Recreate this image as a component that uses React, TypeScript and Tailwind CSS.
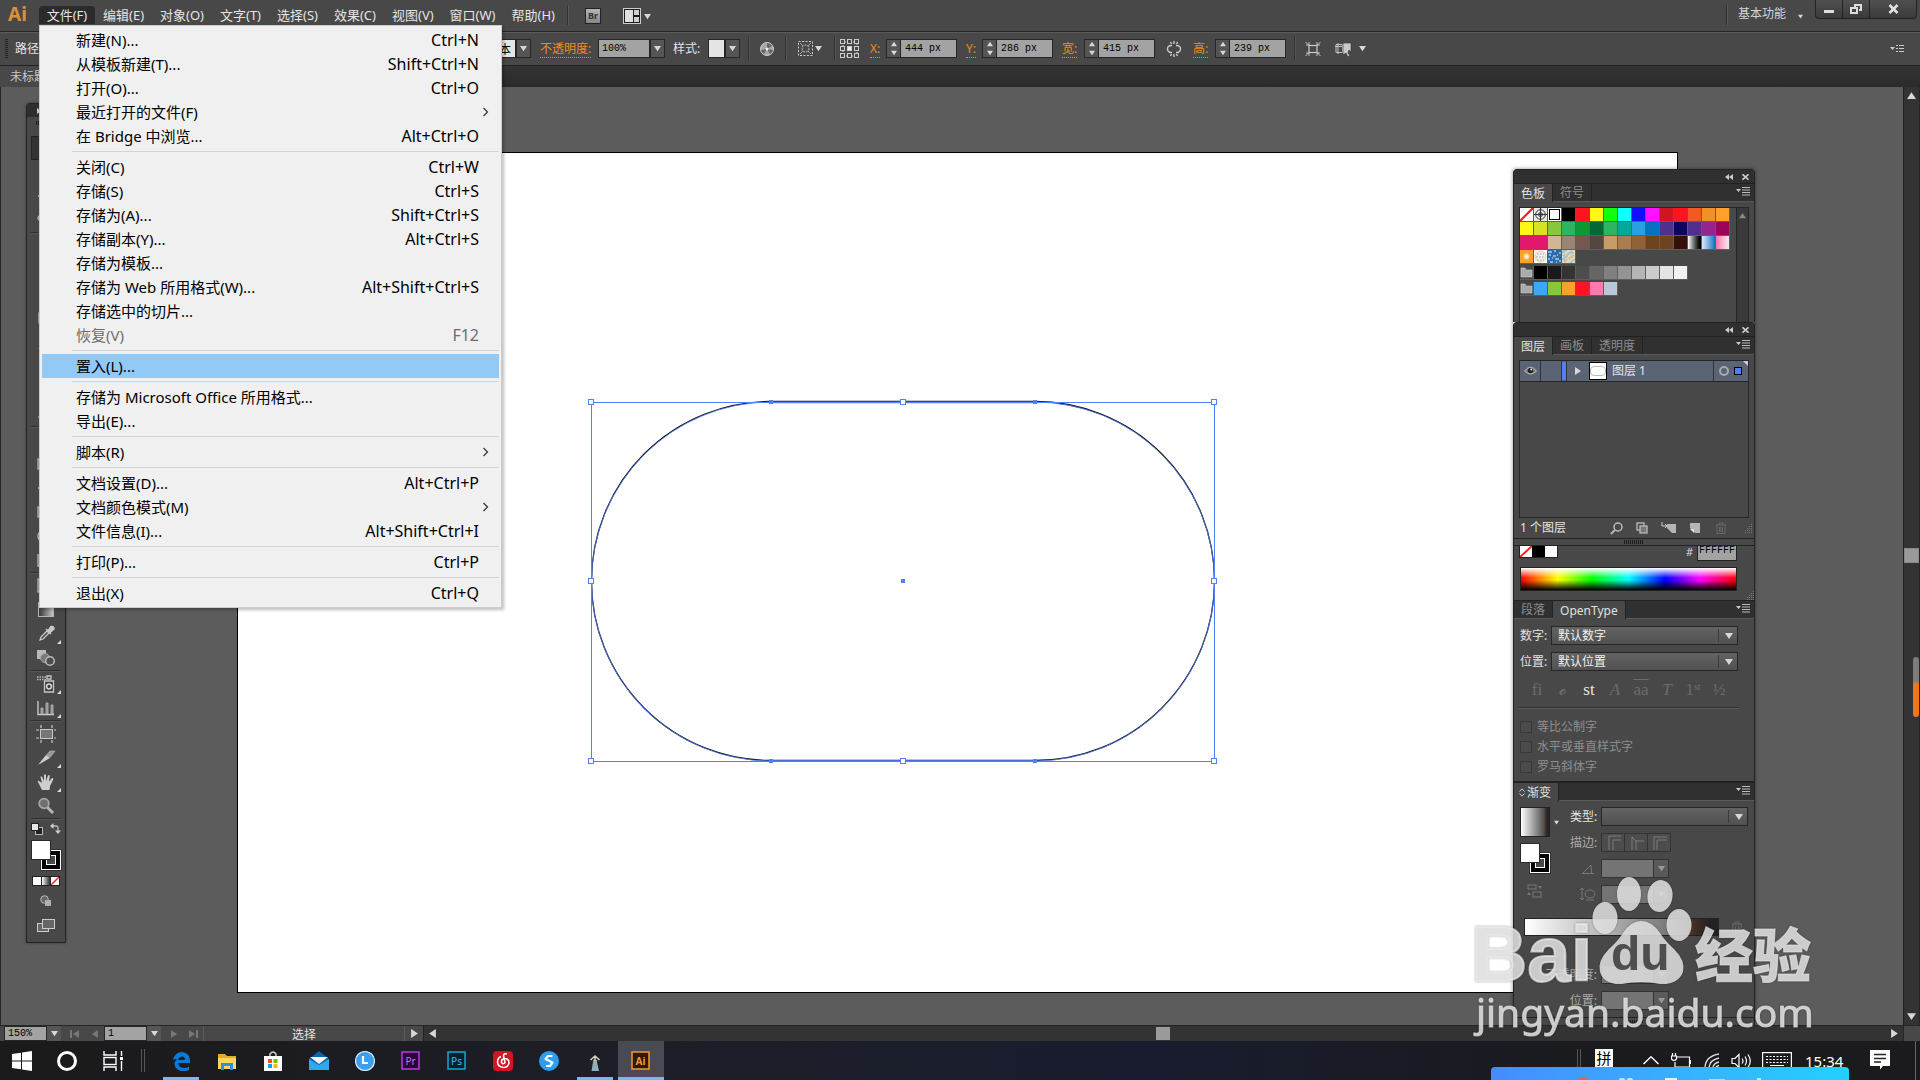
import React from "react";

const UI = 'font-["Noto_Sans","Noto_Sans_CJK_SC",sans-serif]';

type MenuEntry = { label: string; keys?: string; sub?: boolean; disabled?: boolean; active?: boolean };

const fileMenu: MenuEntry[][] = [
  [
    { label: "新建(N)...", keys: "Ctrl+N" },
    { label: "从模板新建(T)...", keys: "Shift+Ctrl+N" },
    { label: "打开(O)...", keys: "Ctrl+O" },
    { label: "最近打开的文件(F)", sub: true },
    { label: "在 Bridge 中浏览...", keys: "Alt+Ctrl+O" },
  ],
  [
    { label: "关闭(C)", keys: "Ctrl+W" },
    { label: "存储(S)", keys: "Ctrl+S" },
    { label: "存储为(A)...", keys: "Shift+Ctrl+S" },
    { label: "存储副本(Y)...", keys: "Alt+Ctrl+S" },
    { label: "存储为模板..." },
    { label: "存储为 Web 所用格式(W)...", keys: "Alt+Shift+Ctrl+S" },
    { label: "存储选中的切片..." },
    { label: "恢复(V)", keys: "F12", disabled: true },
  ],
  [{ label: "置入(L)...", active: true }],
  [{ label: "存储为 Microsoft Office 所用格式..." }, { label: "导出(E)..." }],
  [{ label: "脚本(R)", sub: true }],
  [
    { label: "文档设置(D)...", keys: "Alt+Ctrl+P" },
    { label: "文档颜色模式(M)", sub: true },
    { label: "文件信息(I)...", keys: "Alt+Shift+Ctrl+I" },
  ],
  [{ label: "打印(P)...", keys: "Ctrl+P" }],
  [{ label: "退出(X)", keys: "Ctrl+Q" }],
];

const topMenus = ["编辑(E)", "对象(O)", "文字(T)", "选择(S)", "效果(C)", "视图(V)", "窗口(W)", "帮助(H)"];

function Tri({ dir = "down", size = 7, color = "#d8d8d8" }: { dir?: "down" | "up" | "left" | "right"; size?: number; color?: string }) {
  const pts = { down: "0,1 8,1 4,7", up: "0,7 8,7 4,1", left: "7,0 7,8 1,4", right: "1,0 1,8 7,4" }[dir];
  return (
    <svg width={size} height={size} viewBox="0 0 8 8" className="shrink-0" aria-hidden="true">
      <polygon points={pts} fill={color} />
    </svg>
  );
}

function FileMenu() {
  return (
    <div role="menu" className="absolute top-full left-0 z-30 mt-px w-[463px] border border-[#cccccc] bg-[#f0f0f0] py-[2px] text-[15px] text-black shadow-[2px_2px_3px_rgba(0,0,0,0.25)]">
      {fileMenu.map((group, g) => (
        <React.Fragment key={g}>
          {g > 0 && <div className="my-[3px] mr-[2px] ml-8 h-px bg-[#d4d4d4]" />}
          {group.map((m) => (
            <button
              key={m.label}
              type="button"
              role="menuitem"
              disabled={m.disabled}
              className={`mx-[2px] flex h-6 w-[457px] items-center justify-between pr-5 pl-[34px] text-left whitespace-nowrap ${m.active ? "bg-[#91c9f7]" : ""} ${m.disabled ? "text-[#6d6d6d]" : ""}`}
            >
              <span>{m.label}</span>
              {m.keys && <span className="text-[16px]">{m.keys}</span>}
              {m.sub && (
                <svg width="7" height="10" viewBox="0 0 7 10" className="-mr-[10px]" aria-hidden="true">
                  <path d="M1.5 1L5.5 5L1.5 9" fill="none" stroke="#333" strokeWidth="1.2" />
                </svg>
              )}
            </button>
          ))}
        </React.Fragment>
      ))}
    </div>
  );
}

function MenuBar() {
  return (
    <header className="flex h-[31px] shrink-0 items-start bg-[#484848] text-[13px] text-[#e4e4e4]">
      <div className="w-[38px] pl-2 pt-[3px] text-[19px] leading-[22px] font-bold text-[#d9913a]">Ai</div>
      <div className="relative mt-[6px]">
        <button type="button" aria-haspopup="menu" className="ml-px h-[18px] w-[56px] rounded-t-sm bg-[#2b2b2b] text-center leading-[19px]">
          文件(F)
        </button>
        <div className="absolute top-0 left-px h-[18px] w-[56px]">
          <FileMenu />
        </div>
      </div>
      <nav className="mt-[6px] flex">
        {topMenus.map((m) => (
          <button key={m} type="button" className="h-[18px] px-2 leading-[19px] whitespace-nowrap">
            {m}
          </button>
        ))}
      </nav>
      <div className="mt-[5px] ml-1 h-5 w-[2px] border-l border-[#333] bg-[#5a5a5a]" />
      <button type="button" className="mt-2 ml-4 h-4 w-4 border border-[#222] bg-gradient-to-b from-[#b5b5b5] to-[#868686] text-center text-[9px] leading-[14px] font-bold text-[#333]">
        Br
      </button>
      <button type="button" aria-label="排列文档" className="mt-2 ml-[22px] flex h-4 items-center gap-[3px]">
        <svg width="18" height="16" viewBox="0 0 18 16">
          <rect x=".5" y=".5" width="17" height="15" fill="#1e1e1e" stroke="#ccc" />
          <rect x="2" y="2" width="8" height="12" fill="#e0e0e0" />
          <rect x="11" y="2" width="5" height="5" fill="#d0d0d0" />
          <rect x="11" y="9" width="5" height="5" fill="#d0d0d0" />
        </svg>
        <Tri />
      </button>
      <div className="flex-1" />
      <div className="mt-[5px] h-5 w-[2px] border-l border-[#303030] bg-[#5a5a5a]" />
      <button type="button" className="mt-[5px] ml-[10px] flex h-[18px] items-center gap-3 text-[12px] text-[#d5d5d5]">
        <span>基本功能</span>
        <span className="mt-1 mr-3">
          <Tri size={5} />
        </span>
      </button>
      <div className="mr-[3px] flex h-[19px] rounded-b border border-t-0 border-[#222] bg-gradient-to-b from-[#505050] to-[#3a3a3a]">
        <button type="button" aria-label="最小化" className="flex w-[27px] justify-center border-r border-[#222] pt-[10px]">
          <span className="h-[3px] w-[10px] bg-[#ddd]" />
        </button>
        <button type="button" aria-label="还原" className="flex w-[27px] justify-center border-r border-[#222] pt-1">
          <svg width="12" height="10" viewBox="0 0 12 10" fill="none" stroke="#ddd" strokeWidth="2">
            <path d="M5 3V1H11V6H9" />
            <rect x="1" y="4" width="6" height="5" />
          </svg>
        </button>
        <button type="button" aria-label="关闭窗口" className="flex w-[46px] justify-center pt-1">
          <svg width="11" height="10" viewBox="0 0 11 10" stroke="#e2e2e2" strokeWidth="2.6">
            <path d="M1.5 1L9.5 9M9.5 1L1.5 9" />
          </svg>
        </button>
      </div>
    </header>
  );
}

function Drop({ label, className = "" }: { label: string; className?: string }) {
  return (
    <button type="button" aria-label={label} className={`flex h-[19px] w-[15px] shrink-0 items-center justify-center border border-[#262626] bg-[#555] ${className}`}>
      <Tri />
    </button>
  );
}

function NumField({ id, label, value, wide }: { id: string; label: string; value: string; wide?: boolean }) {
  return (
    <div className="flex shrink-0 items-center">
      <label htmlFor={id} className={`${wide ? "w-[22px]" : "w-4"} text-[#f08a24]`}>
        <span className="border-b border-dotted border-[#f08a24]">{label}:</span>
      </label>
      <div className="flex h-[19px] w-[15px] flex-col items-center justify-between border border-[#262626] bg-[#555] py-px">
        <Tri dir="up" size={6} />
        <Tri size={6} />
      </div>
      <input id={id} defaultValue={value} className='h-[19px] w-14 border border-l-0 border-[#262626] bg-[#a3a3a3] px-1 font-["Liberation_Mono",monospace] text-[10px] text-black' />
    </div>
  );
}

function Sep() {
  return <div className="h-6 w-[2px] shrink-0 border-l border-[#333] bg-[#555]" />;
}

function ControlBar() {
  return (
    <div className="flex h-[34px] shrink-0 items-center overflow-hidden border-t border-[#262626] bg-[#484848] text-[12px] text-[#e4e4e4] shadow-[inset_0_1px_0_#5a5a5a]">
      <div className="ml-[5px] h-5 w-[3px] bg-[repeating-linear-gradient(to_bottom,#222_0_1px,#484848_1px_2px)]" />
      <span className="ml-[7px] w-[420px]">路径</span>
      <label htmlFor="brush" className="sr-only">画笔定义</label>
      <input id="brush" defaultValue="基本" className="h-[19px] w-[81px] border border-[#262626] bg-[#e6e6e6] px-1 text-right text-[12px] text-black" />
      <Drop label="画笔列表" />
      <label htmlFor="opacity" className="ml-[9px] w-[58px] shrink-0 text-[#f08a24]">
        <span className="border-b border-dotted border-[#f08a24]">不透明度:</span>
      </label>
      <input id="opacity" defaultValue="100%" className='h-[19px] w-[52px] shrink-0 border border-[#262626] bg-[#a3a3a3] px-[3px] font-["Liberation_Mono",monospace] text-[10px] text-black' />
      <Drop label="不透明度列表" />
      <span className="ml-2 w-[35px] shrink-0">样式:</span>
      <div className="h-[19px] w-[17px] shrink-0 border border-[#262626] bg-[#e4e4e4]" />
      <Drop label="图形样式" />
      <div className="ml-2"><Sep /></div>
      <svg width="14" height="14" viewBox="0 0 14 14" className="ml-[10px] shrink-0">
        <circle cx="7" cy="7" r="6.5" fill="#a8a8a8" stroke="#ccc" />
        <path d="M7 7V1A6 6 0 0 1 12 4ZM7 7L13 8A6 6 0 0 1 10 12ZM7 7L4 12A6 6 0 0 1 1 8Z" fill="#666" />
        <circle cx="7" cy="7" r="1.5" fill="#eee" />
      </svg>
      <div className="ml-[11px]"><Sep /></div>
      <button type="button" aria-label="选择类似对象" className="ml-[11px] flex shrink-0 items-center gap-[2px]">
        <svg width="15" height="15" viewBox="0 0 15 15" fill="none" stroke="#ccc">
          <rect x=".5" y=".5" width="14" height="14" strokeDasharray="2 1.5" />
          <circle cx="7.5" cy="7.5" r="3.5" strokeDasharray="2 1" />
          <path d="M2 2L5 5M13 2L10 5M2 13L5 10M13 13L10 10" strokeWidth=".7" />
        </svg>
        <Tri />
      </button>
      <div className="ml-[12px]"><Sep /></div>
      <svg width="20" height="20" viewBox="0 0 20 20" className="ml-1 shrink-0" fill="none" stroke="#ccc">
        <path d="M3 3H17V17H3Z" strokeDasharray="1 1" />
        {[1, 8, 15].map((y) => [1, 8, 15].map((x) => <rect key={`${x}-${y}`} x={x - 0.5} y={y - 0.5} width="4" height="4" fill={x === 8 && y === 8 ? "#eee" : "#484848"} />))}
      </svg>
      <div className="ml-[10px]"><NumField id="px" label="X" value="444 px" /></div>
      <div className="ml-[9px]"><NumField id="py" label="Y" value="286 px" /></div>
      <div className="ml-[9px]"><NumField id="pw" label="宽" value="415 px" wide /></div>
      <svg width="16" height="16" viewBox="0 0 16 16" className="ml-[11px] shrink-0" fill="none" stroke="#ccc" strokeWidth="1.4">
        <path d="M6 4.5H5A3.5 3.5 0 0 0 5 11.5H6M10 4.5H11A3.5 3.5 0 0 1 11 11.5H10M8 0V3M4.5 1L5.5 3M11.5 1L10.5 3M8 13V16M4.5 15L5.5 13M11.5 15L10.5 13" />
      </svg>
      <div className="ml-[11px]"><NumField id="ph" label="高" value="239 px" wide /></div>
      <div className="ml-2"><Sep /></div>
      <svg width="16" height="16" viewBox="0 0 16 16" className="ml-[9px] shrink-0" fill="none" stroke="#ccc" strokeWidth="1.2">
        <rect x="4" y="4.5" width="8" height="7" />
        <path d="M.5 1L4 4.5M15.5 1L12 4.5M.5 15L4 11.5M15.5 15L12 11.5M1 4H4V1M15 4H12V1M1 12H4V15M15 12H12V15" strokeWidth=".9" />
      </svg>
      <svg width="18" height="16" viewBox="0 0 18 16" className="ml-[14px] mr-[6px] shrink-0">
        <path d="M1 3.5H7.5V11.5H1ZM0 5.5H9M3 2V13" fill="none" stroke="#c4c4c4" />
        <path d="M8 2H16V11L14 9L13 12L15 15L12.5 15.5L11 12L8 14Z" fill="#c8c8c8" stroke="#333" strokeWidth=".6" />
      </svg>
      <Tri />
      <div className="flex-1" />
      <svg width="14" height="9" viewBox="0 0 14 9" className="mr-4 shrink-0">
        <polygon points="0,3 5,3 2.5,6" fill="#ccc" />
        <path d="M6 1.5H8M9 1.5H14M6 4.5H8M9 4.5H14M6 7.5H8M9 7.5H14" stroke="#ccc" strokeWidth="1.2" />
      </svg>
    </div>
  );
}

const P = { fill: "none", stroke: "#b9b9b9", strokeWidth: 1.3 };
const toolIcons: Record<string, React.ReactNode> = {
  选择: <path d="M6 2V16L10 12H15Z" fill="#ddd" />,
  直接选择: <path d="M6 2V16L10 12H15Z" fill="#ddd" />,
  魔棒: <path d="M1 9H4M9 1V4M5 5L17 17" {...P} />,
  套索: <ellipse cx="9" cy="7" rx="8" ry="4" {...P} />,
  钢笔: <path d="M9 1L5 10L9 17L13 10Z" {...P} />,
  文字: <path d="M3 3H15M9 3V16" {...P} />,
  直线段: <path d="M3 15L15 3" {...P} />,
  矩形: <rect x="2" y="4" width="14" height="10" {...P} />,
  画笔: <path d="M2 16L8 8L16 2" {...P} />,
  铅笔: <path d="M3 15L14 3" {...P} />,
  斑点画笔: <path d="M3 15L14 3" {...P} />,
  橡皮擦: <path d="M2 12L10 4L16 8L8 15Z" {...P} />,
  旋转: <path d="M3 9A6 6 0 1 0 9 3" {...P} />,
  比例缩放: <rect x="1" y="4" width="14" height="10" {...P} />,
  宽度: <path d="M1 9H16M9 3L5 9L9 15" {...P} />,
  自由变换: <rect x="1" y="4" width="14" height="10" {...P} />,
  形状生成器: <circle cx="7" cy="9" r="6" {...P} />,
  透视网格: <path d="M1 3V15H16" {...P} />,
  网格: <rect x="1" y="2" width="15" height="13" {...P} />,
  渐变: (
    <>
      <defs>
        <linearGradient id="toolgrad"><stop stopColor="#333" /><stop offset="1" stopColor="#c8c8c8" /></linearGradient>
      </defs>
      <rect x="1.5" y="1.5" width="15" height="14" fill="url(#toolgrad)" stroke="#b5b5b5" />
    </>
  ),
  吸管: (
    <>
      <path d="M3 15L4 12L10 6L12 8L6 14Z" fill="none" stroke="#ccc" strokeWidth="1.3" />
      <path d="M9 4L14 9M11 6L14 1.5Q17 1 17 4L12.5 8Z" fill="#c8c8c8" stroke="#c8c8c8" strokeWidth="1.5" />
    </>
  ),
  混合: (
    <>
      <rect x="0" y="1" width="9" height="9" fill="#b8b8b8" />
      <circle cx="8" cy="9" r="4.5" fill="#7a7a7a" stroke="#aaa" />
      <circle cx="13" cy="12" r="4.3" fill="#4c4c4c" stroke="#bbb" strokeWidth="1.5" />
    </>
  ),
  符号喷枪: (
    <>
      <path d="M0 2H9M0 4.5H9" stroke="#bbb" strokeWidth="1.5" strokeDasharray="1.5 1" />
      <path d="M10 1H14V4H10ZM7.5 6H16.5V17H7.5Z" fill="#3d3d3d" stroke="#c6c6c6" strokeWidth="1.3" />
      <circle cx="12" cy="11.5" r="2.4" fill="none" stroke="#d5d5d5" strokeWidth="1.5" />
    </>
  ),
  柱形图: (
    <>
      <path d="M1 2V15.5H17" fill="none" stroke="#c8c8c8" strokeWidth="1.4" />
      <path d="M4 9H6V15H4ZM9 4H11V15H9ZM14 6H16V15H14Z" fill="#8c8c8c" stroke="#bdbdbd" strokeWidth=".8" />
    </>
  ),
  画板: (
    <>
      <rect x="3.5" y="4.5" width="12" height="9" fill="#777" stroke="#c8c8c8" />
      <path d="M4 0V3M15 0V3M4 15V18M15 15V18M-1 5H2M17 5H19M-1 13H2M17 13H19" stroke="#c8c8c8" strokeWidth="1.2" />
    </>
  ),
  切片: (
    <>
      <path d="M1 16L9 6L13 9Z" fill="#d0d0d0" />
      <path d="M9.5 6L13 2H18L13 8.5Z" fill="#999" stroke="#bbb" strokeWidth=".6" />
    </>
  ),
  抓手: <path d="M5 17L1 9Q0 7 2 8L5 10L3.5 4Q4 2.5 5.2 4L7 8V2Q8 .5 9 2V8L11 2.5Q12.5 1.5 12.7 3L12 8.5L15 5Q17 4.5 16 7L13 13L12.5 17Z" fill="#cdcdcd" />,
  缩放: (
    <>
      <circle cx="7" cy="6.5" r="4.8" fill="#707070" stroke="#a5a5a5" strokeWidth="1.8" />
      <path d="M10.5 10.5L16 16" stroke="#b5b5b5" strokeWidth="3" />
    </>
  ),
};
const toolGroups = [
  ["选择", "直接选择", "魔棒", "套索"],
  ["钢笔", "文字", "直线段", "矩形", "画笔", "铅笔", "斑点画笔", "橡皮擦"],
  ["旋转", "比例缩放", "宽度", "自由变换", "形状生成器", "透视网格"],
  ["网格", "渐变", "吸管", "混合"],
  ["符号喷枪", "柱形图"],
  ["画板", "切片", "抓手", "缩放"],
];
const flyouts = ["吸管", "符号喷枪", "柱形图", "切片", "抓手"];

function FillStroke() {
  return (
    <div className="relative h-[30px] w-[30px]">
      <div className="absolute right-0 bottom-0 flex h-5 w-5 items-center justify-center border border-white bg-black outline outline-[#333]">
        <div className="h-[10px] w-[10px] border border-white bg-[#484848]" />
      </div>
      <div className="absolute top-0 left-0 h-5 w-5 border border-[#2a2a2a] bg-white" />
    </div>
  );
}

function NoneSwatch({ className = "" }: { className?: string }) {
  return (
    <svg viewBox="0 0 13 13" preserveAspectRatio="none" className={`bg-white ${className}`} aria-hidden="true">
      <path d="M0 13L13 0" stroke="#ff1a1a" strokeWidth="2.2" />
    </svg>
  );
}

function ToolPanel() {
  return (
    <aside className="absolute top-[16px] left-[25px] w-[40px] rounded-t border border-[#232323] bg-[#484848] shadow-[0_0_3px_rgba(0,0,0,0.4)]">
      <div className="flex h-[13px] items-center bg-[#2e2e2e] pl-[10px]">
        <svg width="8" height="6" viewBox="0 0 8 6" fill="#ccc"><path d="M0 0L4 3L0 6ZM4 0L8 3L4 6Z" /></svg>
      </div>
      <div className="mx-auto mt-1 mb-[11px] h-1 w-5 bg-[repeating-linear-gradient(to_right,#1c1c1c_0_1px,#484848_1px_2px)]" />
      {toolGroups.map((group, g) => (
        <div key={g}>
          {g > 0 && <div className="mx-1 h-[2px] border-t border-[#303030] bg-[#565656]" />}
          {group.map((t) => (
            <button key={t} type="button" aria-label={`${t}工具`} className={`relative mx-auto flex h-6 w-[30px] items-center justify-center ${t === "选择" ? "border border-[#222] bg-[#333]" : ""}`}>
              <svg width="18" height="18" viewBox="0 0 18 18" overflow="visible">{toolIcons[t]}</svg>
              {flyouts.includes(t) && (
                <svg width="4" height="4" viewBox="0 0 4 4" className="absolute right-0 bottom-[2px]"><polygon points="4,0 4,4 0,4" fill="#ddd" /></svg>
              )}
            </button>
          ))}
        </div>
      ))}
      <div className="mx-1 h-[2px] border-t border-[#303030] bg-[#565656]" />
      <div className="mt-[3px] flex justify-between px-1">
        <svg width="12" height="12" viewBox="0 0 12 12">
          <rect x="4.5" y="4.5" width="7" height="7" fill="#222" stroke="#bbb" />
          <rect x=".5" y=".5" width="7" height="7" fill="#e8e8e8" stroke="#222" />
        </svg>
        <svg width="11" height="11" viewBox="0 0 11 11">
          <path d="M3 3H6Q8 3 8 5V8" fill="none" stroke="#bbb" strokeWidth="1.3" />
          <path d="M0 3L3.5 0V6ZM8 11L5 7.5H11Z" fill="#ccc" />
        </svg>
      </div>
      <div className="mt-[5px] flex justify-center"><FillStroke /></div>
      <div className="mx-auto mt-[6px] flex h-[10px] w-7 border border-[#222] bg-[#222]">
        <div className="mr-px flex-1 bg-white" />
        <div className="mr-px flex-1 bg-gradient-to-r from-white to-[#333]" />
        <NoneSwatch className="w-2" />
      </div>
      <div className="mt-[9px] flex flex-col items-center gap-[13px] pb-[9px]">
        <svg width="12" height="11" viewBox="0 0 12 11">
          <circle cx="4.5" cy="4.5" r="3.8" fill="#666" stroke="#bbb" />
          <rect x="5" y="5" width="6" height="6" fill="#b0b0b0" />
        </svg>
        <svg width="18" height="14" viewBox="0 0 18 14" fill="#666" stroke="#ccc">
          <rect x=".5" y="4.5" width="11" height="8" />
          <rect x="5.5" y=".5" width="12" height="9" />
        </svg>
      </div>
    </aside>
  );
}

function PanelHeader() {
  return (
    <div className="flex h-[13px] items-center justify-end gap-[9px] bg-[#303030] pr-[5px]">
      <svg width="8" height="6" viewBox="0 0 8 6" fill="#ccc"><path d="M4 0V6L0 3ZM8 0V6L4 3Z" /></svg>
      <svg width="7" height="6" viewBox="0 0 7 6" stroke="#ccc" strokeWidth="1.6"><path d="M.5 .3L6.5 5.7M6.5 .3L.5 5.7" /></svg>
    </div>
  );
}

function Tabs({ names, active, arrow }: { names: string[]; active: number; arrow?: boolean }) {
  return (
    <div role="tablist" className="flex h-[19px] border-y border-t-[#222] border-b-[#5a5a5a] bg-[#303030] text-[12px]">
      {names.map((n, i) => (
        <button
          key={n}
          type="button"
          role="tab"
          aria-selected={i === active}
          className={`flex items-center gap-[2px] border-r border-[#222] px-[7px] leading-[17px] ${i === active ? "-mb-px bg-[#484848] text-[#e0e0e0]" : "text-[#8c8c8c]"}`}
        >
          {arrow && (
            <svg width="6" height="9" viewBox="0 0 6 9" fill="none" stroke="#ccc" className="-ml-[2px]"><path d="M.5 3.5L3 .8L5.5 3.5M.5 5.5L3 8.2L5.5 5.5" /></svg>
          )}
          {n}
        </button>
      ))}
      <div className="flex-1" />
      <svg width="14" height="9" viewBox="0 0 14 9" className="mt-[3px] mr-1" aria-hidden="true">
        <polygon points="0,2 5,2 2.5,5" fill="#ccc" />
        <path d="M6 .5H14M6 3H14M6 5.5H14M6 8H14" stroke="#bbb" />
      </svg>
    </div>
  );
}

const swatchRows = [
  ["none", "reg", "sel", "#000000", "#ff1420", "#fff714", "#10ff10", "#10ffff", "#1010ff", "#ff10ff", "#d01424", "#ff1420", "#f15a24", "#f29028", "#ffa02c"],
  ["#fff714", "#d8e224", "#86c83c", "#2eb560", "#0c9834", "#046834", "#2eb560", "#04a99c", "#29a0e4", "#0472c0", "#50308c", "#0c0660", "#50308c", "#942490", "#9c045c"],
  ["#e2186c", "#e2186c", "#d0b694", "#9c8474", "#745850", "#544640", "#c89c68", "#aa7c50", "#8f6239", "#6c4420", "#6c4420", "#380f08", "gA", "gB", "gC"],
  ["gD", "pA", "pB", "pC"],
];
const grays = ["#000000", "#1a1a1a", "#333333", "#4d4d4d", "#666666", "#808080", "#949494", "#b5b5b5", "#cccccc", "#e4e4e4", "#f1f1f1"];
const brights = ["#3ca8fa", "#86c83c", "#ffa02c", "#ff1420", "#ff7bac", "#b8c8d8"];
const special: Record<string, string> = {
  gA: "bg-gradient-to-r from-white to-black",
  gB: "bg-gradient-to-r from-[#d8ecfa] to-[#0472c0]",
  gC: "bg-gradient-to-r from-[#ff6fb0] to-[#eeeeee]",
  gD: "bg-[radial-gradient(circle,#fff4d0_0_1px,#ffa02c_4px)]",
};

function Swatch({ c }: { c: string }) {
  if (c === "none") return <NoneSwatch className="h-[13px] w-[13px]" />;
  if (c === "reg")
    return (
      <svg width="13" height="13" viewBox="0 0 13 13" className="bg-[#e8e8e8]" fill="none" stroke="#333">
        <circle cx="6.5" cy="6.5" r="4.8" /><circle cx="6.5" cy="6.5" r="2" /><path d="M6.5 0V13M0 6.5H13" />
      </svg>
    );
  if (c === "sel") return <div className="h-[13px] w-[13px] bg-white p-px"><div className="h-full w-full border border-black" /></div>;
  if (c === "folder")
    return (
      <svg width="13" height="13" viewBox="0 0 13 13" className="bg-[#484848]"><path d="M1 2H5L6 4H12V11H1Z" fill="#aaa" stroke="#ccc" strokeWidth=".6" /></svg>
    );
  if (c === "pA")
    return (
      <svg width="13" height="13" viewBox="0 0 13 13" className="bg-white">
        <circle cx="6.5" cy="6.5" r="5.5" fill="#eee" stroke="#e0d878" />
        <path d="M3 4H10M2 7H11M3 10H10" stroke="#bbb" strokeWidth="1.5" strokeDasharray="1.5 1.5" />
      </svg>
    );
  if (c === "pB")
    return (
      <svg width="13" height="13" viewBox="0 0 13 13" className="bg-[#2a6cab]">
        <path d="M0 2H4M6 1H8M11 3H13M1 5H3M5 6H8M9 5H10M0 9H2M4 8H5M7 9H11M2 12H5M8 12H9M11 11H13" stroke="#a5cdea" strokeWidth="1.5" />
      </svg>
    );
  if (c === "pC")
    return (
      <svg width="13" height="13" viewBox="0 0 13 13" className="bg-[#d8dcc0]">
        <path d="M0 3L4 0M5 5L10 1M0 10L6 5" stroke="#9cc0e0" strokeWidth="2" />
        <path d="M7 9L12 5M2 12L5 9M9 4L12 2" stroke="#e6b088" strokeWidth="2" />
        <path d="M8 13L13 9M1 6L3 5" stroke="#98c8a0" strokeWidth="1.500" />
      </svg>
    );
  if (special[c]) return <div className={`h-[13px] w-[13px] ${special[c]}`} />;
  return <div className="h-[13px] w-[13px]" style={{ backgroundColor: c }} />;
}

function SwatchRow({ colors }: { colors: string[] }) {
  return (
    <div className="flex w-fit gap-px border-r border-b border-[#5e5e5e] bg-[#5e5e5e]">
      {colors.map((c, i) => <Swatch key={i} c={c} />)}
    </div>
  );
}

function SwatchesPanel() {
  return (
    <section className="flex h-[153px] flex-col rounded-t border border-b-0 border-[#222] bg-[#484848]">
      <PanelHeader />
      <Tabs names={["色板", "符号"]} active={0} />
      <div className="mx-[5px] mt-[5px] flex flex-1 justify-between border border-b-0 border-[#262626]">
        <div className="flex flex-col">
          {swatchRows.map((r, i) => <SwatchRow key={i} colors={r} />)}
          <div className="h-[2px]" />
          <SwatchRow colors={["folder", ...grays]} />
          <div className="h-[2px]" />
          <SwatchRow colors={["folder", ...brights]} />
        </div>
        <div className="flex w-3 justify-center border-l border-[#262626] bg-[#3a3a3a] pt-1">
          <Tri dir="up" size={7} color="#888" />
        </div>
      </div>
    </section>
  );
}

function Grip() {
  return (
    <div className="flex h-2 shrink-0 items-center justify-center border border-[#222] bg-[#484848]">
      <div className="h-1 w-5 bg-[repeating-linear-gradient(to_right,#1c1c1c_0_1px,#484848_1px_2px)]" />
    </div>
  );
}

function Corner() {
  return (
    <svg width="9" height="9" viewBox="0 0 9 9" className="shrink-0" aria-hidden="true">
      <path d="M8.5 0V9M6.5 2V9M4.5 4V9M2.5 6V9" stroke="#777" strokeDasharray="1 1" />
    </svg>
  );
}

function LayersPanel() {
  return (
    <section className="flex h-[216px] flex-col rounded-t border border-b-0 border-[#222] bg-[#484848] text-[12px] text-[#e4e4e4]">
      <PanelHeader />
      <Tabs names={["图层", "画板", "透明度"]} active={0} />
      <div className="mx-[5px] mt-[5px] flex-1 border border-[#262626]">
        <div className="flex h-[21px] items-stretch border-b border-[#262626] bg-[#5b6475]">
          <button type="button" aria-label="切换可视性" className="flex w-[21px] items-center justify-center border-r border-[#333]">
            <svg width="13" height="10" viewBox="0 0 13 10"><path d="M.5 5Q6.5 -2.5 12.5 5Q6.5 11 .5 5Z" fill="#777" stroke="#bbb" /><circle cx="6.5" cy="4.5" r="2.6" fill="#222" /><circle cx="7.3" cy="3.6" r="1" fill="#eee" /></svg>
          </button>
          <div className="w-[21px] border-r border-[#333]" />
          <div className="my-px w-1 bg-[#4f80ff]" />
          <div className="flex w-[23px] items-center justify-center border-l border-[#333]"><Tri dir="right" size={8} /></div>
          <div className="mt-px flex h-[18px] w-[18px] items-center border border-black bg-white"><div className="h-[10px] flex-1 rounded-[4px] border border-[#bbb]" /></div>
          <span className="ml-[5px] flex-1 leading-5">图层 1</span>
          <div className="flex w-[35px] shrink-0 items-center border-l border-[#333] pl-[5px]">
            <div className="h-[10px] w-[10px] shrink-0 rounded-full border-2 border-[#aaa]" />
            <div className="ml-[5px] h-2 w-2 shrink-0 border border-black bg-[#4f80ff]" />
            <svg width="5" height="5" viewBox="0 0 5 5" className="ml-px shrink-0 self-start"><polygon points="0,0 5,0 5,5" fill="#ccc" /></svg>
          </div>
        </div>
      </div>
      <div className="flex h-5 items-center pr-[2px] pl-[6px]">
        <span className="flex-1">1 个图层</span>
        <svg width="13" height="13" viewBox="0 0 13 13" fill="none" stroke="#bbb"><circle cx="8" cy="5" r="4" strokeWidth="1.5" /><path d="M5 8L.8 12" strokeWidth="1.8" /></svg>
        <svg width="12" height="12" viewBox="0 0 12 12" className="ml-[13px]" fill="none" stroke="#bbb" strokeWidth="1.3"><rect x="1" y="1" width="7" height="7" /><rect x="4" y="4" width="7" height="7" fill="#777" /></svg>
        <svg width="15" height="12" viewBox="0 0 15 12" className="ml-[13px]"><path d="M6 2H15V11H11L6 6Z" fill="#b5b5b5" /><path d="M1 0V4H6M4 2L6 4L4 6" fill="none" stroke="#ccc" /></svg>
        <svg width="12" height="12" viewBox="0 0 12 12" className="ml-[13px]"><path d="M1 1H11V11H6L1 6Z" fill="#b5b5b5" /><path d="M1 7H5V11Z" fill="#ddd" /></svg>
        <svg width="12" height="12" viewBox="0 0 12 12" className="mr-4 ml-[14px]" fill="none" stroke="#666"><path d="M1 3H11M4 3V1H8V3M2 3V11.5H10V3M4.5 5V10M6 5V10M7.5 5V10" /></svg>
        <Corner />
      </div>
    </section>
  );
}

function ColorPanel() {
  return (
    <section className="flex h-[54px] flex-col border border-y-0 border-[#222] bg-[#484848]">
      <div className="flex h-[15px] items-start pl-[5px]">
        <div className="flex h-3 border border-t-0 border-[#222]">
          <NoneSwatch className="h-[11px] w-3" />
          <div className="w-[13px] bg-black" />
          <div className="w-3 bg-white" />
        </div>
        <label htmlFor="hex" className="flex-1 pr-1 text-right text-[11px] leading-3 text-[#ddd]">#</label>
        <input id="hex" defaultValue="FFFFFF" className='mr-[17px] h-[15px] w-10 border border-t-0 border-[#222] bg-[#a3a3a3] px-px pb-[5px] font-["Liberation_Mono",monospace] text-[10px] text-black' />
      </div>
      <div className="mt-[6px] mr-[17px] ml-[6px] h-6 border border-[#222] bg-[linear-gradient(to_bottom,#fff,transparent_45%,transparent_55%,#000),linear-gradient(to_right,#f00,#ff0_17%,#0f0_33%,#0ff_50%,#00f_67%,#f0f_83%,#f00)]" />
      <div className="flex flex-1 items-end justify-end"><Corner /></div>
    </section>
  );
}

const selectCls = "h-full w-full appearance-none border border-[#262626] bg-gradient-to-b from-[#636363] to-[#515151] pl-[6px] text-[12px] leading-4 text-[#f0f0f0]";

function SelectBox({ id, value, className }: { id: string; value: string; className: string }) {
  return (
    <div className={`relative h-[19px] ${className}`}>
      <select id={id} className={selectCls} defaultValue={value}><option>{value}</option></select>
      <div className="pointer-events-none absolute inset-y-[3px] right-[5px] flex items-center border-l border-[#3a3a3a] pl-[6px]"><Tri size={8} /></div>
    </div>
  );
}

function OpenTypePanel() {
  const glyphs: { t: string; c: string }[] = [
    { t: "fi", c: "text-[#6c6c6c]" },
    { t: "𝓸", c: "text-[#6c6c6c]" },
    { t: "st", c: "text-[#e4e4e4]" },
    { t: "A", c: "italic text-[#6c6c6c]" },
    { t: "aa", c: "overline text-[#6c6c6c]" },
    { t: "T", c: "italic text-[#6c6c6c]" },
    { t: "1st", c: "text-[#6c6c6c]" },
    { t: "½", c: "text-[#6c6c6c]" },
  ];
  return (
    <section className="flex h-[182px] flex-col border border-t-0 border-[#222] bg-[#484848] text-[12px] text-[#e4e4e4]">
      <Tabs names={["段落", "OpenType"]} active={1} />
      <div className="mt-[7px] flex items-center pl-[6px]">
        <label htmlFor="figure" className="w-[31px]">数字:</label>
        <SelectBox id="figure" value="默认数字" className="w-[187px]" />
      </div>
      <div className="mt-[7px] flex items-center pl-[6px]">
        <label htmlFor="position" className="w-[31px]">位置:</label>
        <SelectBox id="position" value="默认位置" className="w-[187px]" />
      </div>
      <div className='mt-[9px] flex h-5 items-center pr-[22px] pl-[10px] font-["Liberation_Serif",serif] text-[17px]'>
        {glyphs.map((g) => (
          <button key={g.t} type="button" className={`w-[26px] text-center leading-5 ${g.c}`}>
            {g.t === "1st" ? <>1<sup className="text-[10px]">st</sup></> : g.t}
          </button>
        ))}
      </div>
      <div className="mt-[7px] mr-[15px] ml-[5px] h-[2px] border-t border-[#333] bg-[#5a5a5a]" />
      <div className="mt-2 flex flex-col text-[#8e8e8e]">
        {["等比公制字", "水平或垂直样式字", "罗马斜体字"].map((t) => (
          <label key={t} className="flex h-5 items-center gap-[5px] pl-[6px]">
            <input type="checkbox" disabled className="h-3 w-3 appearance-none border border-[#383838] bg-[#4b4b4b]" />
            {t}
          </label>
        ))}
      </div>
    </section>
  );
}

function GradField({ id, label }: { id: string; label: string }) {
  return (
    <div className="flex">
      <input id={id} aria-label={label} disabled className="h-[19px] w-[53px] border border-[#333] bg-[#747474]" />
      <button type="button" aria-label={`${label}列表`} disabled className="-ml-px flex h-[19px] w-4 items-center justify-center border border-[#333] bg-[#5a5a5a]"><Tri color="#999" /></button>
    </div>
  );
}

function GradientPanel() {
  return (
    <section className="flex min-h-0 flex-1 flex-col overflow-hidden border border-y-0 border-[#222] bg-[#484848] text-[12px] text-[#e4e4e4]">
      <Tabs names={["渐变"]} active={0} arrow />
      <div className="flex pt-[6px] pl-[6px]">
        <div className="flex w-[50px] flex-col">
          <div className="flex items-center gap-1">
            <div className="h-[30px] w-[30px] border border-[#222] bg-[linear-gradient(to_right,#fff,#555_80%,#3a2a24_90%,#222)]" />
            <Tri size={5} />
          </div>
          <div className="mt-[6px]"><FillStroke /></div>
          <svg width="16" height="14" viewBox="0 0 16 14" className="mt-[11px] ml-[7px]" fill="none" stroke="#777"><rect x="1" y="1" width="8" height="4" /><rect x="6" y="8" width="8" height="5" /><path d="M11 2H15L13 5ZM0 11L2 8L4 11Z" fill="#777" stroke="none" /></svg>
        </div>
        <div className="flex flex-1 flex-col gap-[7px]">
          <div className="flex items-center">
            <label htmlFor="gtype" className="w-[31px]">类型:</label>
            <SelectBox id="gtype" value="" className="w-[147px]" />
          </div>
          <div className="flex items-center text-[#aaa]">
            <span className="w-[31px]">描边:</span>
            {[0, 1, 2].map((i) => (
              <button key={i} type="button" disabled aria-label={`描边渐变 ${i + 1}`} className="-mr-px flex h-[19px] w-6 items-center justify-center border border-[#333] bg-[#4c4c4c]">
                <svg width="15" height="15" viewBox="0 0 15 15" fill="none" stroke="#888"><path d={i === 1 ? "M3 15V2L7 6H15M7 15V6" : i === 0 ? "M3 15V1H15M7 15V5H15" : "M2 15V2H15M5 15V5H15"} strokeWidth=".8" /></svg>
              </button>
            ))}
          </div>
          <div className="flex items-center">
            <svg width="12" height="10" viewBox="0 0 12 10" className="mr-[7px] ml-3" fill="none" stroke="#777"><path d="M0 9.5H12M1 9L9 1L9.5 9" /></svg>
            <GradField id="gangle" label="角度" />
          </div>
          <div className="flex items-center">
            <svg width="16" height="13" viewBox="0 0 16 13" className="mr-[5px] ml-[10px]" fill="none" stroke="#777"><ellipse cx="10" cy="6" rx="5" ry="4" /><path d="M2 0V12M0 2L2 0L4 2M0 10L2 12L4 10M6 12H14" /></svg>
            <GradField id="gratio" label="长宽比" />
          </div>
        </div>
      </div>
      <div className="mt-[14px] flex items-center pl-[10px]">
        <div className="h-[18px] w-[195px] border border-[#222] bg-[linear-gradient(to_right,#fff,#777_75%,#432c24_88%,#222_96%)]" />
        <svg width="12" height="12" viewBox="0 0 12 12" className="ml-3" fill="none" stroke="#666"><path d="M1 3H11M4 3V1H8V3M2 3V11.5H10V3M4.5 5V10M7.5 5V10" /></svg>
      </div>
      <div className="mt-[29px] flex items-center text-[#aaa]">
        <label htmlFor="gopa" className="w-[87px] pr-1 text-right">不透明度:</label>
        <GradField id="gopa" label="不透明度" />
      </div>
      <div className="mt-[7px] flex items-center text-[#aaa]">
        <label htmlFor="gpos" className="w-[87px] pr-1 text-right">位置:</label>
        <GradField id="gpos" label="位置" />
      </div>
      <div className="mt-[7px] flex h-2 shrink-0 items-center justify-center border-t border-[#222]">
        <div className="h-[3px] w-5 bg-[repeating-linear-gradient(to_right,#1c1c1c_0_1px,#484848_1px_2px)]" />
      </div>
    </section>
  );
}

function Selection() {
  const handles = [[5, 5], [317, 5], [628, 5], [5, 184], [628, 184], [5, 364], [317, 364], [628, 364]];
  const anchors = [[185, 5], [449, 5], [185, 364], [449, 364], [317, 184]];
  return (
    <svg width="634" height="370" viewBox="0 0 634 370" className="absolute top-[244px] left-[348px]" aria-label="圆角矩形">
      <rect x="5.5" y="4.5" width="623" height="359" rx="179.5" fill="none" stroke="#111" strokeWidth="1.3" />
      <rect x="5.5" y="5" width="623" height="359" rx="179.5" fill="none" stroke="#4f80ff" strokeWidth=".8" />
      <path d="M185 5.5H449M185 364H449" stroke="#4f80ff" strokeWidth="1.5" />
      <rect x="5.5" y="5.5" width="623" height="359" fill="none" stroke="#4f80ff" />
      {handles.map(([x, y]) => <rect key={`${x}-${y}`} x={x - 2.5} y={y - 2.5} width="5" height="5" fill="#fff" stroke="#4f80ff" />)}
      {anchors.map(([x, y]) => <rect key={`${x}-${y}`} x={x - 2} y={y - 2} width="4" height="4" fill="#4f80ff" />)}
    </svg>
  );
}

function Workspace() {
  return (
    <main className="flex min-h-0 flex-1 border-x border-[#262626]">
      <div className="relative min-w-0 flex-1 overflow-hidden bg-[#5c5c5c]">
        <div className="absolute top-[65px] right-[225px] bottom-[32px] left-[236px] border border-black bg-white">
          <Selection />
        </div>
        <ToolPanel />
        <div className="absolute top-[82px] right-[148px] bottom-0 flex w-[242px] flex-col shadow-[0_0_4px_rgba(0,0,0,0.45)]">
          <SwatchesPanel />
          <LayersPanel />
          <Grip />
          <ColorPanel />
          <OpenTypePanel />
          <GradientPanel />
        </div>
      </div>
      <div className="relative flex w-4 shrink-0 flex-col items-center justify-between border-l border-[#222] bg-[#333] py-1">
        <Tri dir="up" size={9} />
        <div className="absolute top-1/2 -mt-2 h-[15px] w-[15px] border border-[#888] bg-[#9a9a9a]" />
        <div className="absolute top-[570px] right-0 h-[60px] w-[6px] rounded-full bg-[linear-gradient(to_bottom,#7c7c7c_40%,#f0761c_45%)]" />
        <Tri size={9} />
      </div>
    </main>
  );
}

function StatusBar() {
  const mono = 'font-["Liberation_Mono",monospace] text-[10px] leading-3 text-black';
  return (
    <div className="flex h-4 shrink-0 items-stretch border-t border-[#262626] bg-[#484848] text-[12px] text-[#e4e4e4]">
      <label htmlFor="zoomv" className="sr-only">缩放</label>
      <input id="zoomv" defaultValue="150%" className={`ml-1 w-[43px] border border-[#262626] bg-[#a3a3a3] px-[3px] ${mono}`} />
      <button type="button" aria-label="缩放列表" className="flex w-[14px] items-center justify-center bg-[#555]"><Tri /></button>
      <div className="flex w-[43px] items-center justify-around pl-1">
        <span className="flex"><span className="h-2 w-[2px] bg-[#777]" /><Tri dir="left" size={8} color="#777" /></span>
        <Tri dir="left" size={8} color="#777" />
      </div>
      <label htmlFor="page" className="sr-only">画板</label>
      <input id="page" defaultValue="1" className={`w-[43px] border border-[#262626] bg-[#a3a3a3] px-[3px] ${mono}`} />
      <button type="button" aria-label="画板列表" className="flex w-[14px] items-center justify-center bg-[#555]"><Tri /></button>
      <div className="flex w-[42px] items-center justify-around pl-1">
        <Tri dir="right" size={8} color="#777" />
        <span className="flex"><Tri dir="right" size={8} color="#777" /><span className="h-2 w-[2px] bg-[#777]" /></span>
      </div>
      <div className="w-[202px] border-x border-[#5c5c5c] text-center leading-[17px]">选择</div>
      <div className="flex w-[18px] items-center justify-center"><Tri dir="right" size={9} /></div>
      <div className="relative flex flex-1 items-center justify-between border-l border-[#222] bg-[#333] px-1">
        <Tri dir="left" size={9} />
        <div className="absolute top-px left-[732px] h-[13px] w-[14px] bg-[#9a9a9a]" />
        <Tri dir="right" size={9} />
      </div>
      <div className="w-[17px] border-l border-[#262626]" />
    </div>
  );
}

const apps: { name: string; open?: boolean; current?: boolean; icon: React.ReactNode }[] = [
  { name: "Edge", open: true, icon: <path d="M2 9Q4 1 11 1Q20 2 19 12H7Q8 17 13 17Q16 17 18 15.5V19Q11 22 6 18Q1 13 6 8Q4 8 2 9ZM7 9H14Q14 5.5 11 5.5Q7.5 6 7 9Z" fill="#0a7ad6" fillRule="evenodd" /> },
  { name: "文件资源管理器", icon: <><path d="M1 3H8L10 5H19V9H1Z" fill="#e8a828" /><path d="M1 7H19V18H1Z" fill="#ffd75e" /><path d="M4 12H16V19H13V15H7V19H4Z" fill="#2f8ee0" /></> },
  { name: "应用商店", icon: <><path d="M7 6V3Q10 -1 13 3V6" fill="none" stroke="#ccc" strokeWidth="1.5" /><rect x="1" y="5" width="18" height="15" fill="#fff" /><path d="M5 8H9V12H5Z" fill="#f25022" /><path d="M10.5 8H14.5V12H10.5Z" fill="#7fba00" /><path d="M5 13H9V17H5Z" fill="#00a4ef" /><path d="M10.5 13H14.5V17H10.5Z" fill="#ffb900" /></> },
  { name: "邮件", icon: <><path d="M0 8L10 0L20 8V19H0Z" fill="#0a63b0" /><path d="M1 6H19L10 13Z" fill="#f4f4f4" /><path d="M0 8L10 14L20 8V19H0Z" fill="#2ea8f0" /></> },
  { name: "时钟", icon: <><circle cx="10" cy="10" r="9.5" fill="#3a9ff0" stroke="#d8ecfa" strokeWidth="1.2" /><path d="M8 5V12H13" fill="none" stroke="#fff" strokeWidth="2.2" /></> },
  { name: "Premiere", icon: <><rect x="1" y="1" width="17" height="17" fill="#2a0634" stroke="#c33cf0" strokeWidth="1.4" /><text x="9.5" y="13.5" fontSize="10" textAnchor="middle" fill="#d868f8">Pr</text></> },
  { name: "Photoshop", icon: <><rect x="1" y="1" width="17" height="17" fill="#06202c" stroke="#10b4d8" strokeWidth="1.4" /><text x="9.5" y="13.5" fontSize="10" textAnchor="middle" fill="#20c8ec">Ps</text></> },
  { name: "网易云音乐", icon: <><rect x="0" y="0" width="20" height="20" rx="4" fill="#d41420" /><path d="M14 3Q10.5 2 10.5 5L12 11.5Q10 14 8.5 11.5Q8 8 11.5 7.5Q16 7.5 16 12Q15 16.5 10.5 16.5Q5 16 4.5 11Q4.5 7 8 5.5" fill="none" stroke="#fff" strokeWidth="1.6" /></> },
  { name: "搜狗", icon: <><circle cx="10" cy="10" r="10" fill="#2f9cec" /><path d="M13.5 5H9L6.5 8L13.5 11.5L11 15H7" fill="none" stroke="#fff" strokeWidth="2.2" strokeLinejoin="round" /></> },
  { name: "工具", open: true, icon: <><path d="M10 5V10M5.5 9L10 5L14.5 9M8 10H12" fill="none" stroke="#d8cfc0" strokeWidth="1.6" /><path d="M8 11H12L14 20H6.5Z" fill="#8fb0bc" /></> },
  { name: "Illustrator", open: true, current: true, icon: <><rect x="1" y="1" width="17" height="17" fill="#2c1a08" stroke="#f09028" strokeWidth="1.6" /><text x="9.5" y="13.5" fontSize="10" fontWeight="bold" textAnchor="middle" fill="#f09a38">Ai</text></> },
];

function Taskbar() {
  return (
    <footer className="relative flex h-[39px] shrink-0 items-stretch overflow-hidden bg-[linear-gradient(to_right,#1b1b1b,#1d1e28_35%,#181c2e_60%,#1b1b1d_85%)] text-white">
      <button type="button" aria-label="开始" className="flex w-11 items-center justify-center">
        <svg width="20" height="20" viewBox="0 0 20 20" fill="#fff"><path d="M0 3L9 1.7V9.5H0ZM10 1.5L20 0V9.5H10ZM0 10.5H9V18.3L0 17ZM10 10.5H20V20L10 18.5Z" /></svg>
      </button>
      <button type="button" aria-label="Cortana" className="flex w-[46px] items-center justify-center">
        <span className="h-5 w-5 rounded-full border-[3px] border-white" />
      </button>
      <button type="button" aria-label="任务视图" className="flex w-[46px] items-center justify-center">
        <svg width="20" height="20" viewBox="0 0 20 20" fill="none" stroke="#fff" strokeWidth="1.4"><path d="M1 0V4H13V0M1 20V16H13V20M18.5 0V5M18.5 10V20" /><rect x="1" y="6.5" width="12" height="7" /><path d="M17 7.5H20" strokeWidth="3" /></svg>
      </button>
      <div className="my-2 ml-[5px] mr-[13px] w-1 border-x border-[#555]" />
      {apps.map((a) => (
        <button key={a.name} type="button" aria-label={a.name} className={`relative flex w-[46px] items-center justify-center ${a.current ? "bg-[#4a4a55]" : ""}`}>
          <svg width="20" height="20" viewBox="0 0 20 20">{a.icon}</svg>
          {a.open && <span className={`absolute bottom-0 h-[3px] bg-[#76b9ed] ${a.current ? "inset-x-0" : "inset-x-[5px]"}`} />}
        </button>
      ))}
      <div className="flex-1" />
      <div className="flex items-center">
        <div className="mr-[14px] h-6 w-1 border-x border-[#555]" />
        <span className="-mt-1 mr-[30px] h-[19px] w-[18px] bg-white text-center text-[15px] leading-[19px] text-black">拼</span>
        <svg width="16" height="9" viewBox="0 0 16 9" className="mr-3" fill="none" stroke="#fff" strokeWidth="1.4"><path d="M.5 8L8 .8L15.5 8" /></svg>
        <svg width="20" height="16" viewBox="0 0 20 16" className="mr-[13px]" fill="none" stroke="#fff" strokeWidth="1.2"><path d="M6 4H18.5V14H4V9M19.5 7V11M1.5 0V3M4.5 0V3M.5 3H5.5V6Q3 9 .5 6Z" /></svg>
        <svg width="16" height="16" viewBox="0 0 16 16" className="mr-[11px]" fill="none" stroke="#ddd" strokeWidth="1.3"><path d="M1 14Q2 3 15 1M5 14Q6 7 15 5M9 14Q10 10 15 9M12 14Q13 13 15 12.5" /></svg>
        <svg width="21" height="16" viewBox="0 0 21 16" className="mr-[10px]" fill="none" stroke="#fff" strokeWidth="1.2"><path d="M1 5.5H4L8 1.5V14.5L4 10.5H1ZM11 5.5Q13 8 11 10.5M14 3.5Q17 8 14 12.5M17 1.5Q21.5 8 17 14.5" /></svg>
        <svg width="30" height="17" viewBox="0 0 30 17" className="mr-[13px]" fill="none" stroke="#fff"><rect x=".6" y=".6" width="28.8" height="15.8" strokeWidth="1.2" /><path d="M4 4.5H26M4 7.5H26M4 10.5H26" strokeDasharray="2 1.5" /><path d="M8 13.5H22" /></svg>
        <span className="mr-[25px] w-10 text-[15px] leading-5">15:34</span>
        <svg width="20" height="20" viewBox="0 0 20 20" className="-mt-px mr-[25px]"><path d="M0 0H20V16H13L10 19.5V16H0Z" fill="#fff" /><path d="M4 4.5H16M4 8.5H16M4 12H11" stroke="#222" strokeWidth="1.3" /></svg>
        <div className="mr-1 h-full w-px bg-[#666]" />
      </div>
      <div className="absolute right-[71px] bottom-0 flex h-[13px] w-[358px] items-end justify-center gap-8 rounded-t-sm bg-gradient-to-r from-[#448cff] to-[#20d0ff]">
        <span className="h-[3px] w-2 rounded-t-full bg-[#ff5a50]" />
        <span className="flex gap-[2px]"><span className="h-[2px] w-[6px] rounded-t-full bg-[#bfe6ff]" /><span className="h-[2px] w-[6px] rounded-t-full bg-[#bfe6ff]" /></span>
        <span className="h-[2px] w-3 bg-[#d8f4ff]" />
        <span className="h-px w-4 bg-[#8fe4ff]" />
        <span className="h-[2px] w-1 bg-[#bff0ff]" />
      </div>
    </footer>
  );
}

function Watermark() {
  return (
    <svg width="360" height="176" viewBox="0 0 360 176" className="pointer-events-none absolute right-[95px] bottom-[34px] z-20 drop-shadow-[0_0_1px_rgba(0,0,0,0.35)]" fill="#ebebeb" fillOpacity=".82">
      <text x="6" y="111" fontSize="78" className='font-["Liberation_Sans",sans-serif] font-bold' stroke="#ebebeb" strokeWidth="2" strokeOpacity=".7">Bai</text>
      <ellipse cx="140" cy="48" rx="12.5" ry="16" />
      <ellipse cx="164" cy="24" rx="12" ry="17" />
      <ellipse cx="195" cy="26" rx="12.5" ry="16" transform="rotate(8 195 26)" />
      <ellipse cx="214" cy="55" rx="12.5" ry="16" />
      <path d="M176 51Q187 51 195 63Q200 71 209 79Q221 91 218 102Q213 115 195 114Q186 112 176 112Q166 112 157 114Q139 115 135 102Q132 91 144 79Q153 71 158 63Q166 51 176 51Z" />
      <text x="146" y="100" fontSize="48" fill="#484848" fillOpacity=".95" className='font-["Liberation_Sans",sans-serif] font-bold'>du</text>
      <text x="230" y="107" fontSize="58" className='font-["Noto_Sans_CJK_SC",sans-serif] font-black' stroke="#ebebeb" strokeWidth="1" strokeOpacity=".6">经验</text>
      <text x="11" y="157" fontSize="39" className='font-["Noto_Sans",sans-serif]' stroke="#ebebeb" strokeOpacity=".6">jingyan.baidu.com</text>
    </svg>
  );
}

export default function App() {
  return (
    <div className={`relative flex h-screen flex-col overflow-hidden bg-[#484848] ${UI}`}>
      <MenuBar />
      <ControlBar />
      <div className="flex h-[22px] shrink-0 items-center border-t border-[#222] bg-gradient-to-b from-[#343434] to-[#2a2a2a] text-[12px] text-[#c8c8c8]">
        <span className="h-full w-[180px] bg-[#484848] pl-[10px] leading-[22px]">未标题-1* @ 150%</span>
      </div>
      <Workspace />
      <StatusBar />
      <Taskbar />
      <Watermark />
    </div>
  );
}
